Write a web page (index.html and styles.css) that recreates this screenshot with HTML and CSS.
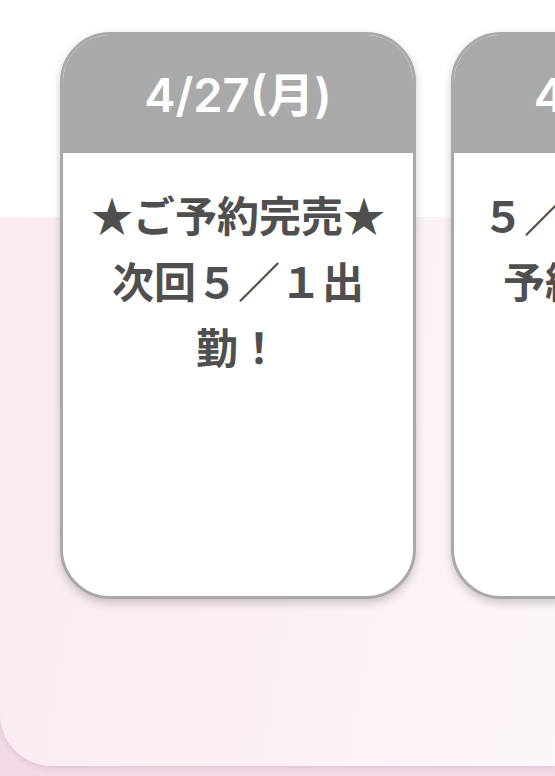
FILE: index.html
```html
<!DOCTYPE html>
<html lang="ja">
<head>
<meta charset="utf-8">
<link rel="stylesheet" href="styles.css">
</head>
<body>
<div class="panel">
  <div class="cards">
    <div class="card">
      <div class="card-head">4/27(月)</div>
      <div class="card-body">★ご予約完売★次回５／１出勤！</div>
    </div>
    <div class="card">
      <div class="card-head">4/28(火)</div>
      <div class="card-body">５／１出勤！ご予約受付中♪</div>
    </div>
  </div>
</div>
</body>
</html>
```

FILE: styles.css
```css
html, body {
  margin: 0;
  padding: 0;
}
body {
  width: 555px;
  height: 776px;
  overflow: hidden;
  background: #f1d9e6;
  font-family: "Noto Sans CJK JP", "Noto Sans", sans-serif;
}
.panel {
  height: 766px;
  border-bottom-left-radius: 52px;
  background:
    linear-gradient(to bottom, #ffffff 0, #ffffff 217px, rgba(255,255,255,0) 217px),
    linear-gradient(100deg, #faeaf3 0%, #fbeef5 50%, #fdf7fa 100%);
  box-shadow: 0 2px 5px rgba(150, 100, 125, 0.18);
  overflow: hidden;
}
.cards {
  display: flex;
  gap: 35px;
  padding: 32px 0 0 60px;
}
.card {
  flex: 0 0 356px;
  box-sizing: border-box;
  height: 567px;
  border: 3px solid #a9a9a9;
  border-radius: 50px;
  background: #ffffff;
  overflow: hidden;
  box-shadow: 0 4px 10px rgba(0, 0, 0, 0.2);
  display: flex;
  flex-direction: column;
}
.card-head {
  box-sizing: border-box;
  height: 118px;
  padding-bottom: 6px;
  background: #a9a9a9;
  color: #ffffff;
  font-family: "Inter", "Noto Sans CJK JP", sans-serif;
  font-size: 47px;
  font-weight: 600;
  display: flex;
  align-items: center;
  justify-content: center;
}
.card-body {
  flex: 1;
  padding: 28px 20px 0;
  color: #4f4f4f;
  font-size: 42px;
  font-weight: 700;
  line-height: 66px;
  text-align: center;
}
```
